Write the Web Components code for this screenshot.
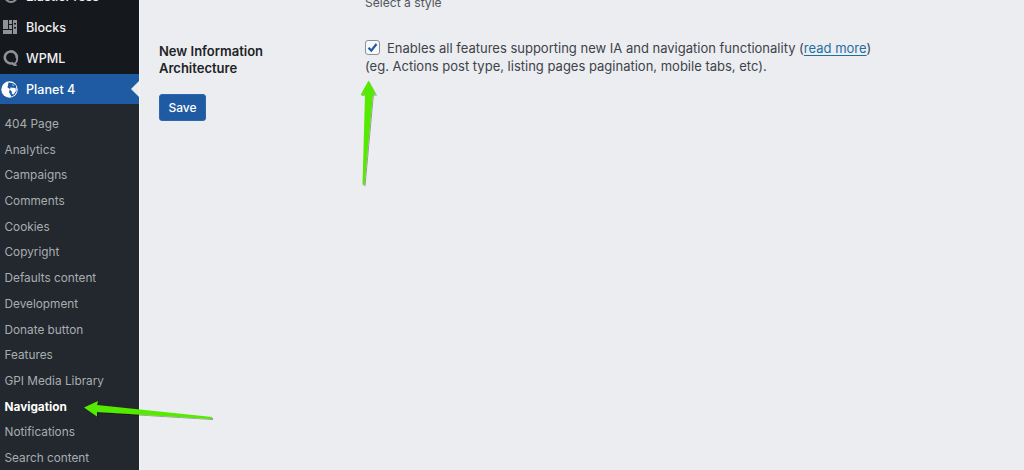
<!DOCTYPE html>
<html>
<head>
<meta charset="utf-8">
<style>
  html,body{ margin:0; height:100%; overflow:hidden; background:#ecedf0; }
  body{ font-family:Inter,"Liberation Sans",sans-serif; }
  wp-shell{ height:470px; }
</style>
</head>
<body>
<template id="shell-tpl">
  <style>
    :host{ display:grid; grid-template-columns:139px 1fr; position:relative; overflow:hidden; }
    .sep{ border-left:1px solid #f6f6f7; min-width:0; }
  </style>
  <slot name="side"></slot>
  <div class="sep"><slot></slot></div>
  <slot name="over"></slot>
</template>

<template id="side-tpl">
  <style>
    :host{ display:block; background:#22282d; height:470px; overflow:hidden; }
    .top{ background:#15191d; margin-top:-19px; }
    .subs{ padding-top:8px; }
  </style>
  <div class="top"><slot name="top"></slot></div>
  <div class="subs"><slot></slot></div>
</template>

<template id="top-tpl">
  <style>
    :host{ display:flex; align-items:center; box-sizing:border-box; height:31px; padding-bottom:1px; color:#f0f0f1; font-size:12.6px; font-weight:500; position:relative; }
    :host([current]){ background:#1f5ba3; color:#fff; height:30px; padding-bottom:0; }
    :host([current])::after{ content:""; position:absolute; right:0; top:50%; margin-top:-8px;
      border:8px solid transparent; border-right-color:#ecedf0; border-left:0; }
    .ic{ width:26px; display:flex; flex:none; }
  </style>
  <span class="ic"><slot name="icon"></slot></span>
  <slot></slot>
</template>

<template id="sub-tpl">
  <style>
    :host{ display:block; height:25.7px; line-height:25.7px; padding-left:4.500px; font-size:11.800px; color:#a9adb2; white-space:nowrap; }
    :host([current]){ color:#fff; font-weight:700; }
  </style>
  <slot></slot>
</template>

<template id="main-tpl">
  <style>
    :host{ display:block; height:470px; overflow:hidden; padding-left:19px; color:#3c434a; font-size:13px; }
    .hint{ margin:-6px 0 0 206px; line-height:18px; color:#50575e; font-size:12.100px; }
    .row{ display:grid; grid-template-columns:206px 1fr; margin-top:26px; }
    h3{ margin:0; width:115px; font-size:13px; line-height:16.500px; font-weight:600; color:#1d2327; padding-top:5px; }
    .field{ white-space:nowrap; }
    .save{ margin-top:18px; }
  </style>
  <div class="hint">Select a style</div>
  <div class="row">
    <h3>New Information Architecture</h3>
    <div class="field"><slot></slot></div>
  </div>
  <div class="save"><slot name="action"></slot></div>
</template>

<template id="check-tpl">
  <style>
    :host{ display:block; }
    .line{ display:flex; align-items:center; gap:7px; height:20px; }
    .box{ width:15px; height:15px; box-sizing:border-box; border:1px solid #8a9099; border-radius:3px; background:#f8f8f9; display:flex; align-items:center; justify-content:center; flex:none; margin-top:-1px; }
    .more{ line-height:16px; }
  </style>
  <div class="line">
    <span class="box"><svg width="13" height="13" viewBox="0 0 13 13"><path d="M2.500 6.800 5.300 9.600 10.500 3" fill="none" stroke="#1f5ba3" stroke-width="2.200"/></svg></span>
    <span><slot name="first"></slot></span>
  </div>
  <div class="more"><slot></slot></div>
</template>

<template id="link-tpl">
  <style>
    :host{ display:inline-block; color:#1f6f9f; text-decoration:underline; text-underline-offset:2px; }
  </style>
  <slot></slot>
</template>

<template id="btn-tpl">
  <style>
    :host{ display:inline-flex; align-items:center; justify-content:center; width:47px; height:27px; box-sizing:border-box; background:#1f5ba3; border:1px solid #2c67ad; border-radius:3px; color:#fff; font-size:12px; font-weight:500; }
  </style>
  <slot></slot>
</template>

<script>
  // all the elements here are plain template clones, only the tag and template differ
  const parts={
    'wp-shell':'shell-tpl','wp-side':'side-tpl','wp-top':'top-tpl','wp-sub':'sub-tpl',
    'wp-main':'main-tpl','wp-check':'check-tpl','wp-link':'link-tpl','wp-btn':'btn-tpl'
  };
  for(const tag in parts){
    customElements.define(tag,class extends HTMLElement{
      constructor(){
        super();
        this.attachShadow({mode:'open'});
        this.shadowRoot.appendChild(document.getElementById(parts[tag]).content.cloneNode(true));
      }
    });
  }
</script>

<wp-shell>
  <wp-side slot="side">
    <wp-top slot="top">
      <svg slot="icon" style="margin-left:2px" width="18" height="18" viewBox="0 0 18 18"><circle cx="9" cy="9" r="6" fill="none" stroke="#8b8f94" stroke-width="2"/></svg>
      ElasticPress
    </wp-top>
    <wp-top slot="top">
      <svg slot="icon" style="margin-left:3px" width="14" height="14" viewBox="0 0 14 14" fill="#8f9297"><path d="M0 0h5v9H0zM0 10h9v4H0zM6 0h3v4H6zM6 5h3v4H6zM10 0h4v14h-4z"/><path d="M11 3h2v1.500h-2zM11 7h2v1.500h-2z" fill="#15191d"/></svg>
      Blocks
    </wp-top>
    <wp-top slot="top">
      <svg slot="icon" style="margin-left:3px" width="16" height="18" viewBox="0 0 16 18" fill="none"><path d="M10.500 13.800A6 6 0 1 1 13.800 9" stroke="#8f9297" stroke-width="2.600"/><path d="M13.800 8.500c.8 3-.6 5.500-3.400 6.800 1 1 2 1.200 3.200.5" stroke="#8f9297" stroke-width="1.800"/></svg>
      WPML
    </wp-top>
    <wp-top slot="top" current>
      <svg slot="icon" style="margin-left:1px" width="17" height="17" viewBox="0 0 17 17"><circle cx="8.500" cy="8.500" r="8.200" fill="#fff"/><path d="M7.500 1.500Q12 1.200 15 4.500L15.500 11Q14 14.500 10.500 15.700L8 11 9 8 6.500 6.500z" fill="#1f5ba3"/><path d="M9.500 6.500 14.500 7 15 10 12.500 13.500 11 13 10.500 10 9 9zM11 3.200 13 4.200 12 5z" fill="#fff"/></svg>
      Planet 4
    </wp-top>
    <wp-sub>404 Page</wp-sub>
    <wp-sub>Analytics</wp-sub>
    <wp-sub>Campaigns</wp-sub>
    <wp-sub>Comments</wp-sub>
    <wp-sub>Cookies</wp-sub>
    <wp-sub>Copyright</wp-sub>
    <wp-sub>Defaults content</wp-sub>
    <wp-sub>Development</wp-sub>
    <wp-sub>Donate button</wp-sub>
    <wp-sub>Features</wp-sub>
    <wp-sub>GPI Media Library</wp-sub>
    <wp-sub current>Navigation</wp-sub>
    <wp-sub>Notifications</wp-sub>
    <wp-sub>Search content</wp-sub>
  </wp-side>

  <wp-main>
    <wp-check>
      <span slot="first">Enables all features supporting new IA and navigation functionality (<wp-link>read more</wp-link>)</span>
      (eg. Actions post type, listing pages pagination, mobile tabs, etc).
    </wp-check>
    <wp-btn slot="action">Save</wp-btn>
  </wp-main>

  <!-- green annotation arrows drawn over the screenshot -->
  <svg slot="over" width="1024" height="470" style="position:absolute;left:0;top:0;pointer-events:none">
    <defs><filter id="s" x="-20%" y="-20%" width="140%" height="140%"><feDropShadow dx="1" dy="1" stdDeviation=".7" flood-color="#000" flood-opacity=".35"/></filter></defs>
    <path filter="url(#s)" fill="#55ea00" d="M368.500 80.500 376 94.500 372.800 94.500 364.500 185 362.500 184.500 365 94.500 360.500 95z"/>
    <path filter="url(#s)" fill="#55ea00" d="M84 407.500 98 401 97 405 212 417 212 419 97 412 97 416.500z"/>
  </svg>
</wp-shell>
</body>
</html>
